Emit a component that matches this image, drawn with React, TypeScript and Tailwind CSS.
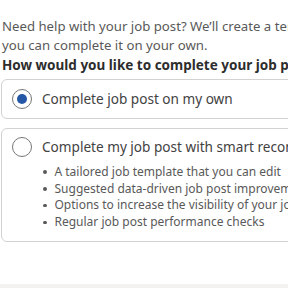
export default function App() {
  const bullets = [
    'A tailored job template that you can edit',
    'Suggested data-driven job post improvements',
    'Options to increase the visibility of your job post',
    'Regular job post performance checks',
  ];

  return (
    <div className="w-[288px] h-[288px] overflow-hidden bg-white flex flex-col font-['Noto_Sans',sans-serif]">
      <div className="w-[460px] pl-[2px] pt-[16.5px] flex-1">
        <p className="text-[13.2px] leading-[19.5px] text-[#595959] whitespace-nowrap">
          Need help with your job post? We’ll create a template that
          <br />
          you can complete it on your own.
        </p>
        <p className="text-[13.5px] leading-[19.5px] font-bold text-[#2d2d2d] whitespace-nowrap">
          How would you like to complete your job post?
        </p>

        <div className="mt-[4px] flex flex-col gap-[9px] -ml-[1px]">
          {/* Option 1 */}
          <div className="h-[40px] border border-[#d4d2d0] rounded-[6px] flex items-center pl-[10px] gap-[10px]">
            <span className="w-[20px] h-[20px] rounded-full border border-[#767676] flex items-center justify-center">
              <span className="w-[10px] h-[10px] rounded-full bg-[#2557a7]" />
            </span>
            <span className="text-[13.6px] text-[#424242] whitespace-nowrap">Complete job post on my own</span>
          </div>

          {/* Option 2 */}
          <div className="h-[114px] border border-[#d4d2d0] rounded-[6px] pl-[10px] pt-[7.5px]">
            <div className="flex items-center gap-[10px]">
              <span className="w-[20px] h-[20px] rounded-full border border-[#767676]" />
              <span className="text-[13.6px] text-[#424242] whitespace-nowrap">Complete my job post with smart recommendations</span>
            </div>
            <ul className="mt-[7px] pl-[31px] flex flex-col">
              {bullets.map((b) => (
                <li key={b} className="flex items-center gap-[8px] text-[12px] leading-[16.7px] text-[#595959] whitespace-nowrap">
                  <span className="w-[3.5px] h-[3.5px] rounded-full bg-[#595959] shrink-0" />
                  {b}
                </li>
              ))}
            </ul>
          </div>
        </div>
      </div>
      <div className="h-[4px] bg-[#f3f2f1]" />
    </div>
  );
}
